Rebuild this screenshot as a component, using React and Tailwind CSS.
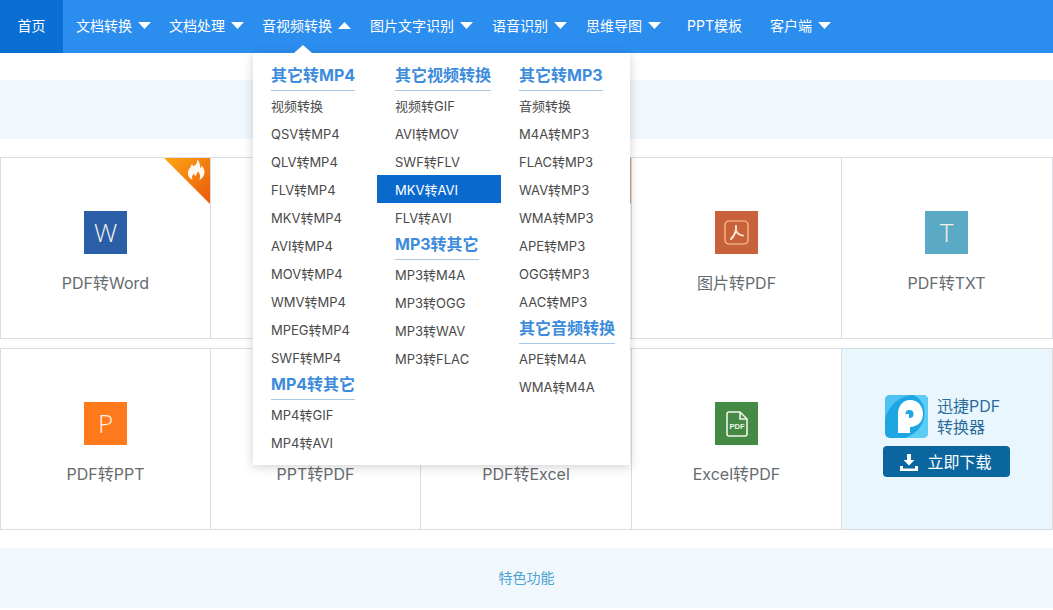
const navItems = [
  { label: '文档转换', arrow: 'down', cls: 'ml-[13px]' },
  { label: '文档处理', arrow: 'down', cls: 'ml-[18px]' },
  { label: '音视频转换', arrow: 'up', cls: 'ml-[18px]' },
  { label: '图片文字识别', arrow: 'down', cls: 'ml-[19px]' },
  { label: '语音识别', arrow: 'down', cls: 'ml-[19px]' },
  { label: '思维导图', arrow: 'down', cls: 'ml-[19px]' },
  { label: 'PPT模板', cls: 'ml-[26px]' },
  { label: '客户端', arrow: 'down', cls: 'ml-[28px]' },
];

const menuColumns = [
  [
    { title: '其它转MP4', items: ['视频转换', 'QSV转MP4', 'QLV转MP4', 'FLV转MP4', 'MKV转MP4', 'AVI转MP4', 'MOV转MP4', 'WMV转MP4', 'MPEG转MP4', 'SWF转MP4'] },
    { title: 'MP4转其它', items: ['MP4转GIF', 'MP4转AVI'] },
  ],
  [
    { title: '其它视频转换', items: ['视频转GIF', 'AVI转MOV', 'SWF转FLV', 'MKV转AVI', 'FLV转AVI'] },
    { title: 'MP3转其它', items: ['MP3转M4A', 'MP3转OGG', 'MP3转WAV', 'MP3转FLAC'] },
  ],
  [
    { title: '其它转MP3', items: ['音频转换', 'M4A转MP3', 'FLAC转MP3', 'WAV转MP3', 'WMA转MP3', 'APE转MP3', 'OGG转MP3', 'AAC转MP3'] },
    { title: '其它音频转换', items: ['APE转M4A', 'WMA转M4A'] },
  ],
];

function Arrow({ dir }) {
  return (
    <svg width="13" height="7" viewBox="0 0 13 7" className="ml-[6px]">
      <path d={dir === 'up' ? 'M0 7 L6.5 0 L13 7 Z' : 'M0 0 H13 L6.5 7 Z'} fill="#fff" />
    </svg>
  );
}

function Corner({ fill, flame }) {
  return (
    <svg width="46" height="46" viewBox="0 0 46 46" className="absolute top-0 right-0">
      <defs>
        <linearGradient id="hot" x1="0" y1="0" x2="1" y2="1">
          <stop offset="0" stopColor="#ffa514" />
          <stop offset="1" stopColor="#e8590c" />
        </linearGradient>
      </defs>
      <path d="M0 0 H46 V46 Z" fill={fill} />
      {flame && (
        <path
          d="M33 1.5 C33.5 5.5 31.5 7 29.5 8.5 C29 7 28.5 6.5 27.5 6 C27.8 8.5 24.5 10.5 24 14 C23.5 17.5 25.5 20.5 28.5 22 C27.5 19.5 28 17.5 30 15.5 C30.2 17 31 17.8 32 18 C32 16.5 33.5 15 34 13.5 C35.8 15.5 36.8 18 35.5 22 C38.5 20.5 40.8 17 40.5 13.5 C40.3 11 39 9 37.5 7.5 C37.5 9 37 9.8 36.2 10.3 C36.6 7 35.5 3.5 33 1.5 Z"
          fill="#fff"
          opacity="0.94"
        />
      )}
    </svg>
  );
}

function LetterIcon({ bg, letter }) {
  return (
    <div className={`w-[43px] h-[43px] flex items-center justify-center text-[26px] font-light text-[#f6f3e8] ${bg}`} style={{ fontFamily: '"Open Sans", sans-serif' }}>
      {letter}
    </div>
  );
}

function AcrobatIcon() {
  return (
    <div className="w-[43px] h-[43px] flex items-center justify-center bg-[#c8623a]">
      <svg width="25" height="25" viewBox="0 0 25 25" fill="none" stroke="#ffc9a0" strokeWidth="1.2">
        <rect x="1" y="1" width="23" height="23" rx="4" />
        <path d="M12 6 C12.6 11 11 15 7 19 M12.3 11 C13.5 14 15.5 15 19 15.6" stroke="#ffe6d2" strokeWidth="1.9" strokeLinecap="round" />
      </svg>
    </div>
  );
}

function SheetIcon() {
  return (
    <div className="w-[43px] h-[43px] flex items-center justify-center bg-[#448a44]">
      <svg width="22" height="26" viewBox="0 0 22 26" fill="none" stroke="#eef6ea" strokeWidth="1.6">
        <path d="M3 1 H14 L21 8 V23 A2 2 0 0 1 19 25 H3 A2 2 0 0 1 1 23 V3 A2 2 0 0 1 3 1 Z" />
        <path d="M14 1 V8 H21" />
        <text x="11" y="18" textAnchor="middle" fontSize="7.5" fontWeight="700" fill="#eef6ea" stroke="none" fontFamily="Liberation Sans, sans-serif">PDF</text>
      </svg>
    </div>
  );
}

// cells under the dropdown have no icon of their own, only the spacer
function Cell({ icon, label, corner, last }) {
  return (
    <div className={`relative flex flex-col items-center pt-[53px] border-l border-[#d9dce0] ${last ? 'border-r pr-[1px]' : ''}`}>
      {corner}
      {icon || <div className="h-[43px]" />}
      {label && <div className="mt-[17px] text-base leading-6 text-[#666b70]">{label}</div>}
    </div>
  );
}

function AppLogo() {
  return (
    <svg width="43" height="43" viewBox="0 0 43 43" className="shrink-0">
      <rect width="43" height="43" rx="5" fill="#1ea6e2" />
      <path d="M5 0 H26 C14 2 4 10 0 24 V5 A5 5 0 0 1 5 0 Z" fill="#4cc1f2" />
      <path d="M28 0 H38 A5 5 0 0 1 43 5 V38 A5 5 0 0 1 38 43 H20 C34 38 42 26 39 12 C37 6 33 2 28 0 Z" fill="#5accf6" />
      <path d="M13 38 V19 C13 11 18 5 25 5 C33 5 38 11 38 19 C38 27 32 32 25 32 V38 Z" fill="#fff" />
      <circle cx="24.5" cy="19" r="4" fill="#1ea6e2" />
      <path d="M20.5 19 H24 V38 H20.5 Z" fill="#fff" />
    </svg>
  );
}

function DownloadCell() {
  return (
    <div className="flex flex-col items-center pt-[46px] pr-[2px] border-x border-[#d9dce0] bg-[#e9f6fd]">
      <div className="flex items-center w-[122px] self-center">
        <AppLogo />
        <div className="ml-[9px] text-base leading-[21px] text-[#2b6c9c]">迅捷PDF<br />转换器</div>
      </div>
      <div className="mt-[8px] w-[127px] h-[31px] rounded-[4px] bg-[#0b659f] flex items-center justify-center text-white text-base">
        <svg width="18" height="18" viewBox="0 0 18 18" fill="#fff" className="mr-[9px]">
          <path d="M7 1 H11 V7 H14.5 L9 12.5 L3.5 7 H7 Z" />
          <path d="M0 13 H3 V15.5 H15 V13 H18 V18 H0 Z" />
        </svg>
        立即下载
      </div>
    </div>
  );
}

function DropMenu() {
  return (
    <div className="absolute left-[253px] top-[53px] w-[377px] h-[412px] bg-white shadow-[0_2px_10px_rgba(0,0,0,0.18)] pt-[9px] flex z-10">
      {menuColumns.map((col, i) => (
        <div key={i} className="w-[124px] pl-[18px]">
          {col.map((group) => (
            <div key={group.title}>
              <div className="flex">
                <div className="h-[29px] leading-[26px] text-base font-bold text-[#3c8bdc] border-b border-[#a9c8e6]">{group.title}</div>
              </div>
              {group.items.map((item) => (
                <div
                  key={item}
                  className={`h-[28px] pt-[1px] leading-[28px] text-[13px] -ml-[18px] pl-[18px] ${item === 'MKV转AVI' ? 'bg-[#0a69cd] text-white' : 'text-[#4a4a4a]'}`}
                >
                  {item}
                </div>
              ))}
            </div>
          ))}
        </div>
      ))}
    </div>
  );
}

export default function App() {
  return (
    <div className="relative w-[1053px] h-[610px] overflow-hidden bg-white" style={{ fontFamily: 'Inter, "Noto Sans CJK SC", sans-serif' }}>
      <div className="h-[53px] bg-[#2b8ded] flex items-center text-sm text-white">
        <div className="h-full w-[63px] pb-[2px] bg-[#0a6fd2] flex items-center justify-center">首页</div>
        {navItems.map((item) => (
          <div key={item.label} className={`flex items-center pb-[2px] ${item.cls}`}>
            <span>{item.label}</span>
            {item.arrow && <Arrow dir={item.arrow} />}
          </div>
        ))}
      </div>
      <svg width="18" height="8" viewBox="0 0 18 8" className="absolute left-[294px] top-[45px] z-20">
        <path d="M0 8 L9 0 L18 8 Z" fill="#fff" />
      </svg>
      <DropMenu />

      <div className="mt-[27px] h-[59px] bg-[#f0f7fd]" />

      <div className="mt-[18px] grid grid-cols-[210px_210px_211px_210px_212px] h-[182px] border-y border-[#d9dce0]">
        <Cell icon={<LetterIcon bg="bg-[#2a5fa8]" letter="W" />} label="PDF转Word" corner={<Corner fill="url(#hot)" flame />} />
        <Cell />
        <Cell corner={<Corner fill="#c9ab7c" />} />
        <Cell icon={<AcrobatIcon />} label="图片转PDF" />
        <Cell icon={<LetterIcon bg="bg-[#5aaac6]" letter="T" />} label="PDF转TXT" last />
      </div>

      <div className="mt-[9px] grid grid-cols-[210px_210px_211px_210px_212px] h-[182px] border-y border-[#d9dce0]">
        <Cell icon={<LetterIcon bg="bg-[#ff7a1c]" letter="P" />} label="PDF转PPT" />
        <Cell label="PPT转PDF" />
        <Cell label="PDF转Excel" />
        <Cell icon={<SheetIcon />} label="Excel转PDF" />
        <DownloadCell />
      </div>

      <div className="mt-[18px] h-[60px] bg-[#f0f7fd] flex items-center justify-center text-sm text-[#4ba3cf]">特色功能</div>
    </div>
  );
}
